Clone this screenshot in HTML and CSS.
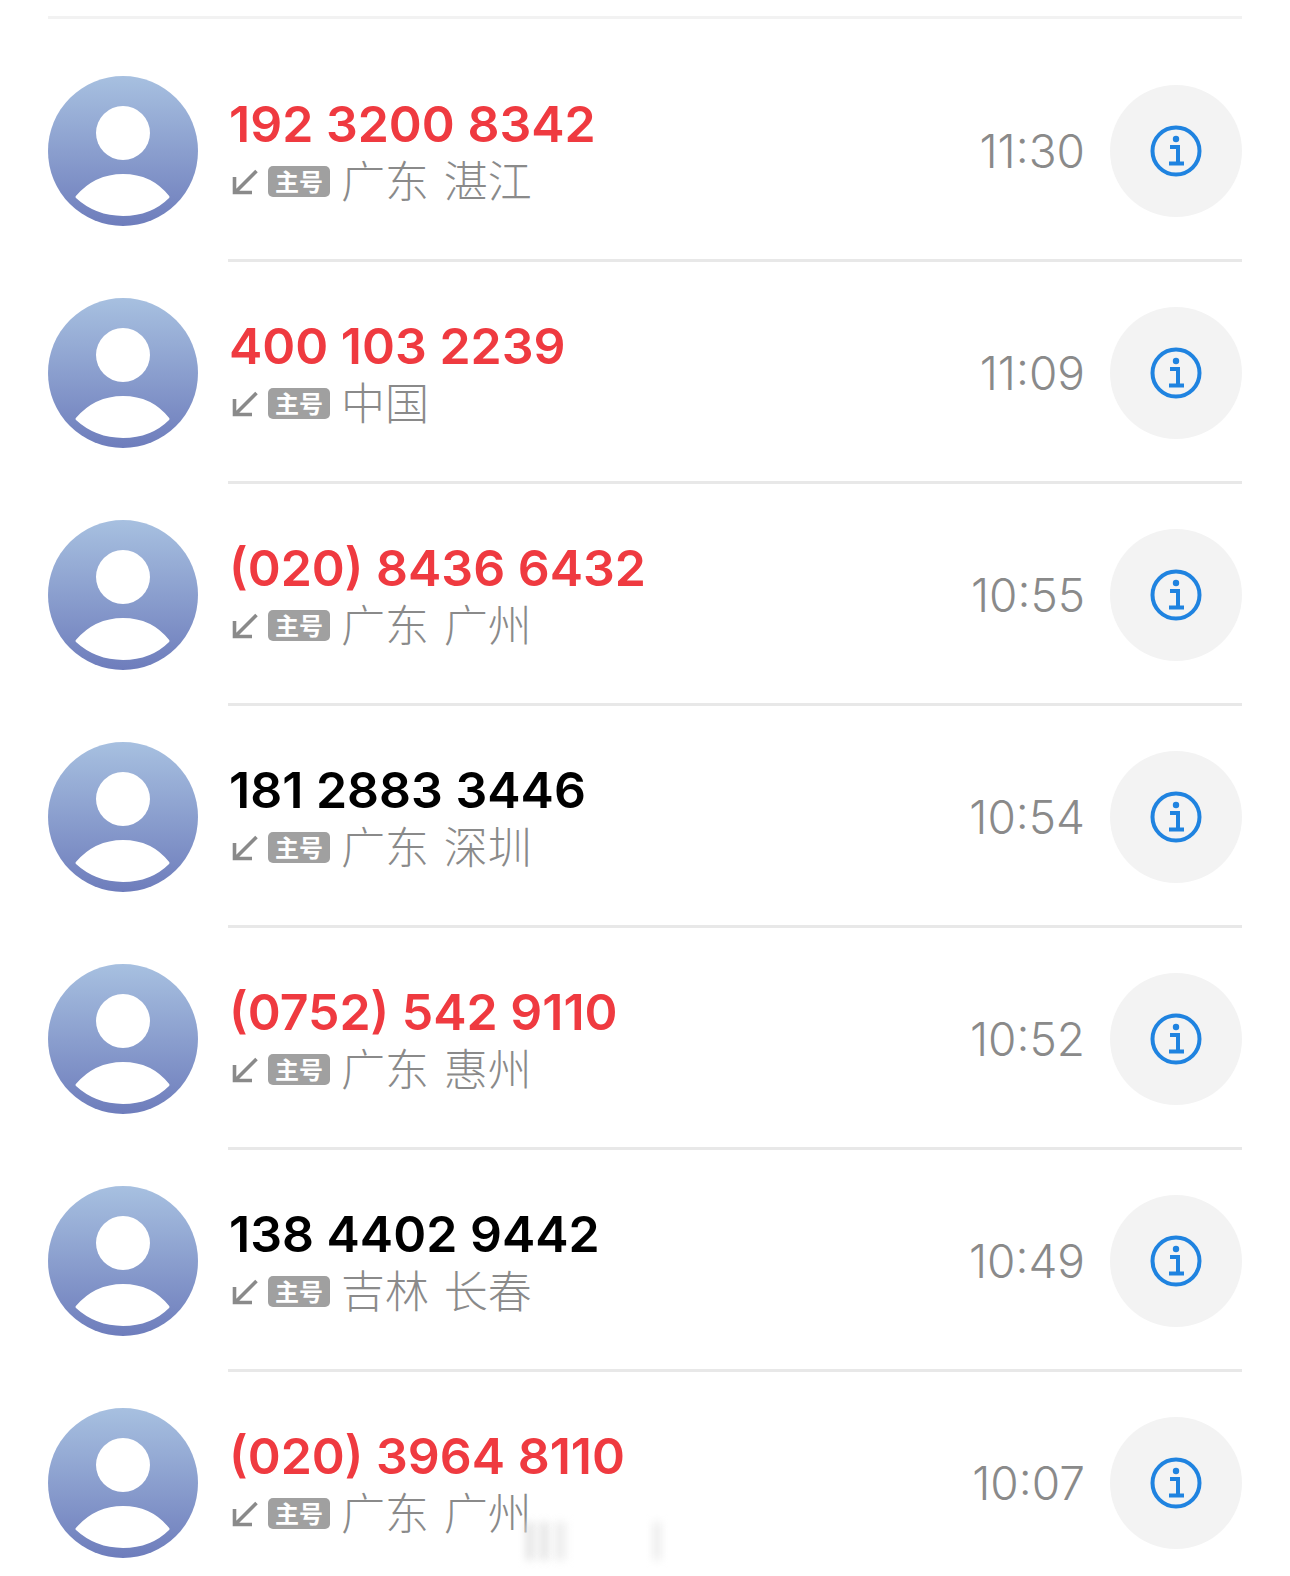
FILE: index.html
```html
<!DOCTYPE html>
<html lang="zh-CN">
<head>
    <meta charset="UTF-8">
    <meta name="viewport" content="width=device-width, initial-scale=1.0">
    <title>通话记录</title>
    <link rel="stylesheet" href="styles.css">
</head>
<body>
    <svg class="defs" width="0" height="0">
        <defs>
            <linearGradient id="avatar-fill" x1="0" y1="0" x2="0" y2="1">
                <stop offset="0" stop-color="#a7c0e0"/>
                <stop offset="1" stop-color="#6e7dbc"/>
            </linearGradient>
            <symbol id="avatar" viewBox="0 0 150 150">
                <circle cx="75" cy="75" r="75" fill="url(#avatar-fill)"/>
                <circle cx="75" cy="57" r="27" fill="#fff"/>
                <path fill="#fff" stroke="#fff" stroke-width="3" stroke-linejoin="round" d="M29 121C41 107 57 99.500 75 99.500C93 99.500 109 107 120 121C109 132 93 138.500 75 138.500C57 138.500 41 132 29 121Z"/>
            </symbol>
            <symbol id="incoming" viewBox="0 0 26 26">
                <path d="M24.500 2L3 23.500M2.500 8V23.500H20" fill="none" stroke="#8a8a8a" stroke-width="3.600"/>
            </symbol>
            <symbol id="info" viewBox="0 0 52 52">
                <circle cx="26" cy="26" r="23.500" fill="none" stroke="#1f83e0" stroke-width="4"/>
                <circle cx="26" cy="14" r="3.200" fill="#1f83e0"/>
                <path d="M20 22H28V37M19 38.500H34" fill="none" stroke="#1f83e0" stroke-width="4"/>
            </symbol>
        </defs>
    </svg>

    <div class="list">
        <div class="row">
            <svg class="avatar"><use href="#avatar"/></svg>
            <div class="content">
                <div class="text">
                    <div class="number missed">192 3200 8342</div>
                    <div class="sub">
                        <svg class="arrow"><use href="#incoming"/></svg>
                        <span class="sim">主号</span>
                        <span class="place">广东 湛江</span>
                    </div>
                </div>
                <div class="time">11:30</div>
                <div class="info"><svg class="info-icon"><use href="#info"/></svg></div>
            </div>
        </div>
        <div class="row">
            <svg class="avatar"><use href="#avatar"/></svg>
            <div class="content">
                <div class="text">
                    <div class="number missed">400 103 2239</div>
                    <div class="sub">
                        <svg class="arrow"><use href="#incoming"/></svg>
                        <span class="sim">主号</span>
                        <span class="place">中国</span>
                    </div>
                </div>
                <div class="time">11:09</div>
                <div class="info"><svg class="info-icon"><use href="#info"/></svg></div>
            </div>
        </div>
        <div class="row">
            <svg class="avatar"><use href="#avatar"/></svg>
            <div class="content">
                <div class="text">
                    <div class="number missed">(020) 8436 6432</div>
                    <div class="sub">
                        <svg class="arrow"><use href="#incoming"/></svg>
                        <span class="sim">主号</span>
                        <span class="place">广东 广州</span>
                    </div>
                </div>
                <div class="time">10:55</div>
                <div class="info"><svg class="info-icon"><use href="#info"/></svg></div>
            </div>
        </div>
        <div class="row">
            <svg class="avatar"><use href="#avatar"/></svg>
            <div class="content">
                <div class="text">
                    <div class="number">181 2883 3446</div>
                    <div class="sub">
                        <svg class="arrow"><use href="#incoming"/></svg>
                        <span class="sim">主号</span>
                        <span class="place">广东 深圳</span>
                    </div>
                </div>
                <div class="time">10:54</div>
                <div class="info"><svg class="info-icon"><use href="#info"/></svg></div>
            </div>
        </div>
        <div class="row">
            <svg class="avatar"><use href="#avatar"/></svg>
            <div class="content">
                <div class="text">
                    <div class="number missed">(0752) 542 9110</div>
                    <div class="sub">
                        <svg class="arrow"><use href="#incoming"/></svg>
                        <span class="sim">主号</span>
                        <span class="place">广东 惠州</span>
                    </div>
                </div>
                <div class="time">10:52</div>
                <div class="info"><svg class="info-icon"><use href="#info"/></svg></div>
            </div>
        </div>
        <div class="row">
            <svg class="avatar"><use href="#avatar"/></svg>
            <div class="content">
                <div class="text">
                    <div class="number">138 4402 9442</div>
                    <div class="sub">
                        <svg class="arrow"><use href="#incoming"/></svg>
                        <span class="sim">主号</span>
                        <span class="place">吉林 长春</span>
                    </div>
                </div>
                <div class="time">10:49</div>
                <div class="info"><svg class="info-icon"><use href="#info"/></svg></div>
            </div>
        </div>
        <div class="row">
            <svg class="avatar"><use href="#avatar"/></svg>
            <div class="content">
                <div class="text">
                    <div class="number missed">(020) 3964 8110</div>
                    <div class="sub">
                        <svg class="arrow"><use href="#incoming"/></svg>
                        <span class="sim">主号</span>
                        <span class="place">广东 广州</span>
                    </div>
                </div>
                <div class="time">10:07</div>
                <div class="info"><svg class="info-icon"><use href="#info"/></svg></div>
            </div>
        </div>
    </div>

    <div class="smudge">
        <span class="bar"></span>
        <span class="bar"></span>
        <span class="bar wide"></span>
        <span class="bar far"></span>
    </div>
</body>
</html>
```

FILE: styles.css
```css
* {
    margin: 0;
    padding: 0;
    box-sizing: border-box;
}
html, body {
    height: 1576px;
    overflow: hidden;
}
body {
    background: #fff;
    font-family: 'Inter', 'Noto Sans CJK SC', sans-serif;
    position: relative;
}
.defs {
    position: absolute;
}
.list {
    margin: 0 48px;
    padding-top: 21px;
    position: relative;
}
.list::before {
    content: '';
    display: block;
    height: 3px;
    margin-top: -5px;
    margin-bottom: 21px;
    background: #f2f2f2;
}
.row {
    display: flex;
    align-items: center;
    height: 222px;
}
.avatar {
    width: 150px;
    height: 150px;
    flex: none;
}
.content {
    flex: 1;
    height: 100%;
    margin-left: 30px;
    padding-top: 3px;
    display: flex;
    align-items: center;
    border-bottom: 3px solid #e8e8e8;
}
.text {
    flex: 1;
    padding-left: 1px;
    margin-top: -2px;
}
.number {
    font-size: 50px;
    font-weight: 600;
    line-height: 62px;
    color: #000;
}
.number.missed {
    color: #ef3a40;
}
.sub {
    display: flex;
    align-items: center;
    height: 52px;
}
.arrow {
    width: 26px;
    height: 26px;
    margin-left: 3px;
    margin-top: 2px;
    flex: none;
}
.sim {
    width: 62px;
    height: 31px;
    margin-left: 10px;
    border-radius: 5px;
    background: #a0a0a0;
    color: #fff;
    font-size: 24px;
    font-weight: 700;
    line-height: 30px;
    text-align: center;
    font-family: 'Noto Sans CJK SC', sans-serif;
}
.place {
    margin-left: 11px;
    padding-bottom: 4px;
    font-family: 'Noto Sans CJK SC', sans-serif;
    font-size: 44px;
    font-weight: 300;
    word-spacing: 5px;
    color: #8a8a8a;
    line-height: 52px;
}
.time {
    font-size: 46px;
    font-weight: 300;
    color: #8a8a8a;
    margin-right: 25px;
}
.info {
    width: 132px;
    height: 132px;
    border-radius: 50%;
    background: #f3f3f3;
    display: flex;
    align-items: center;
    justify-content: center;
    flex: none;
}
.info-icon {
    width: 52px;
    height: 52px;
}
/* blurred streaks left at the bottom of the screenshot */
.smudge {
    position: absolute;
    left: 526px;
    top: 1522px;
    display: flex;
    gap: 6px;
}
.bar {
    width: 8px;
    height: 38px;
    background: #e2e2e2;
    filter: blur(4px);
}
.bar.wide {
    width: 12px;
    background: #eee;
}
.bar.far {
    width: 6px;
    margin-left: 82px;
    background: #e6e6e6;
}
```
